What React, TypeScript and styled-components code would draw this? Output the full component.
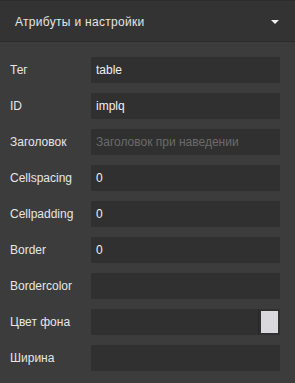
import styled, { createGlobalStyle } from "styled-components";

const GlobalStyle = createGlobalStyle`
  html, body {
    margin: 0;
    padding: 0;
    background: #3c3c3c;
  }
  * {
    box-sizing: border-box;
  }
`;

const rows = [
  { label: "Тег", value: "table" },
  { label: "ID", value: "implq" },
  { label: "Заголовок", placeholder: "Заголовок при наведении" },
  { label: "Cellspacing", value: "0" },
  { label: "Cellpadding", value: "0" },
  { label: "Border", value: "0" },
  { label: "Bordercolor", value: "" },
  { label: "Цвет фона", value: "", color: "#d9d8dd" },
  { label: "Ширина", value: "" },
];

export default function App() {
  return (
    <>
      <GlobalStyle />
      <Panel>
        <Header>
          <Title>Атрибуты и настройки</Title>
          <Caret />
        </Header>
        <Body>
          {rows.map((r) => (
            <Row key={r.label}>
              <Label>{r.label}</Label>
              <Field>
                <Input defaultValue={r.value} placeholder={r.placeholder} />
                {r.color && (
                  <Swatch>
                    <SwatchFill style={{ background: r.color }} />
                  </Swatch>
                )}
              </Field>
            </Row>
          ))}
        </Body>
      </Panel>
    </>
  );
}

const Panel = styled.div`
  width: 295px;
  height: 383px;
  background: #3c3c3c;
  font-family: "Liberation Sans", Arial, sans-serif;
`;

const Header = styled.div`
  height: 42px;
  display: flex;
  align-items: center;
  justify-content: space-between;
  padding: 0 16px 0 15px;
  background: #333333;
  border-top: 1px solid #2c2c2c;
  border-bottom: 1px solid #2a2a2a;
`;

const Title = styled.span`
  font-size: 12px;
  letter-spacing: 0.3px;
  color: #e4e4e4;
  margin-top: 1px;
`;

const Caret = styled.span`
  width: 0;
  height: 0;
  border-left: 4px solid transparent;
  border-right: 4px solid transparent;
  border-top: 4px solid #f0f0f0;
  margin-top: 1px;
`;

const Body = styled.div`
  display: flex;
  flex-direction: column;
  gap: 10px;
  padding: 15px 15px 0 10px;
`;

const Row = styled.div`
  display: flex;
  align-items: center;
  height: 26px;
`;

const Label = styled.span`
  width: 81px;
  font-size: 12px;
  color: #e6e6e6;
`;

const Field = styled.div`
  flex: 1;
  height: 26px;
  display: flex;
  align-items: center;
  background: #303030;
`;

const Input = styled.input`
  flex: 1;
  min-width: 0;
  height: 100%;
  border: none;
  outline: none;
  background: transparent;
  padding: 0 5px;
  font-family: "Liberation Sans", Arial, sans-serif;
  font-size: 12px;
  color: #f0f0f0;

  &::placeholder {
    color: #6b6b6b;
  }
`;

const Swatch = styled.div`
  height: 100%;
  display: flex;
  align-items: center;
  padding: 0 2px 0 2px;
  border-left: 1px solid #262626;
`;

const SwatchFill = styled.div`
  width: 17px;
  height: 22px;
`;
